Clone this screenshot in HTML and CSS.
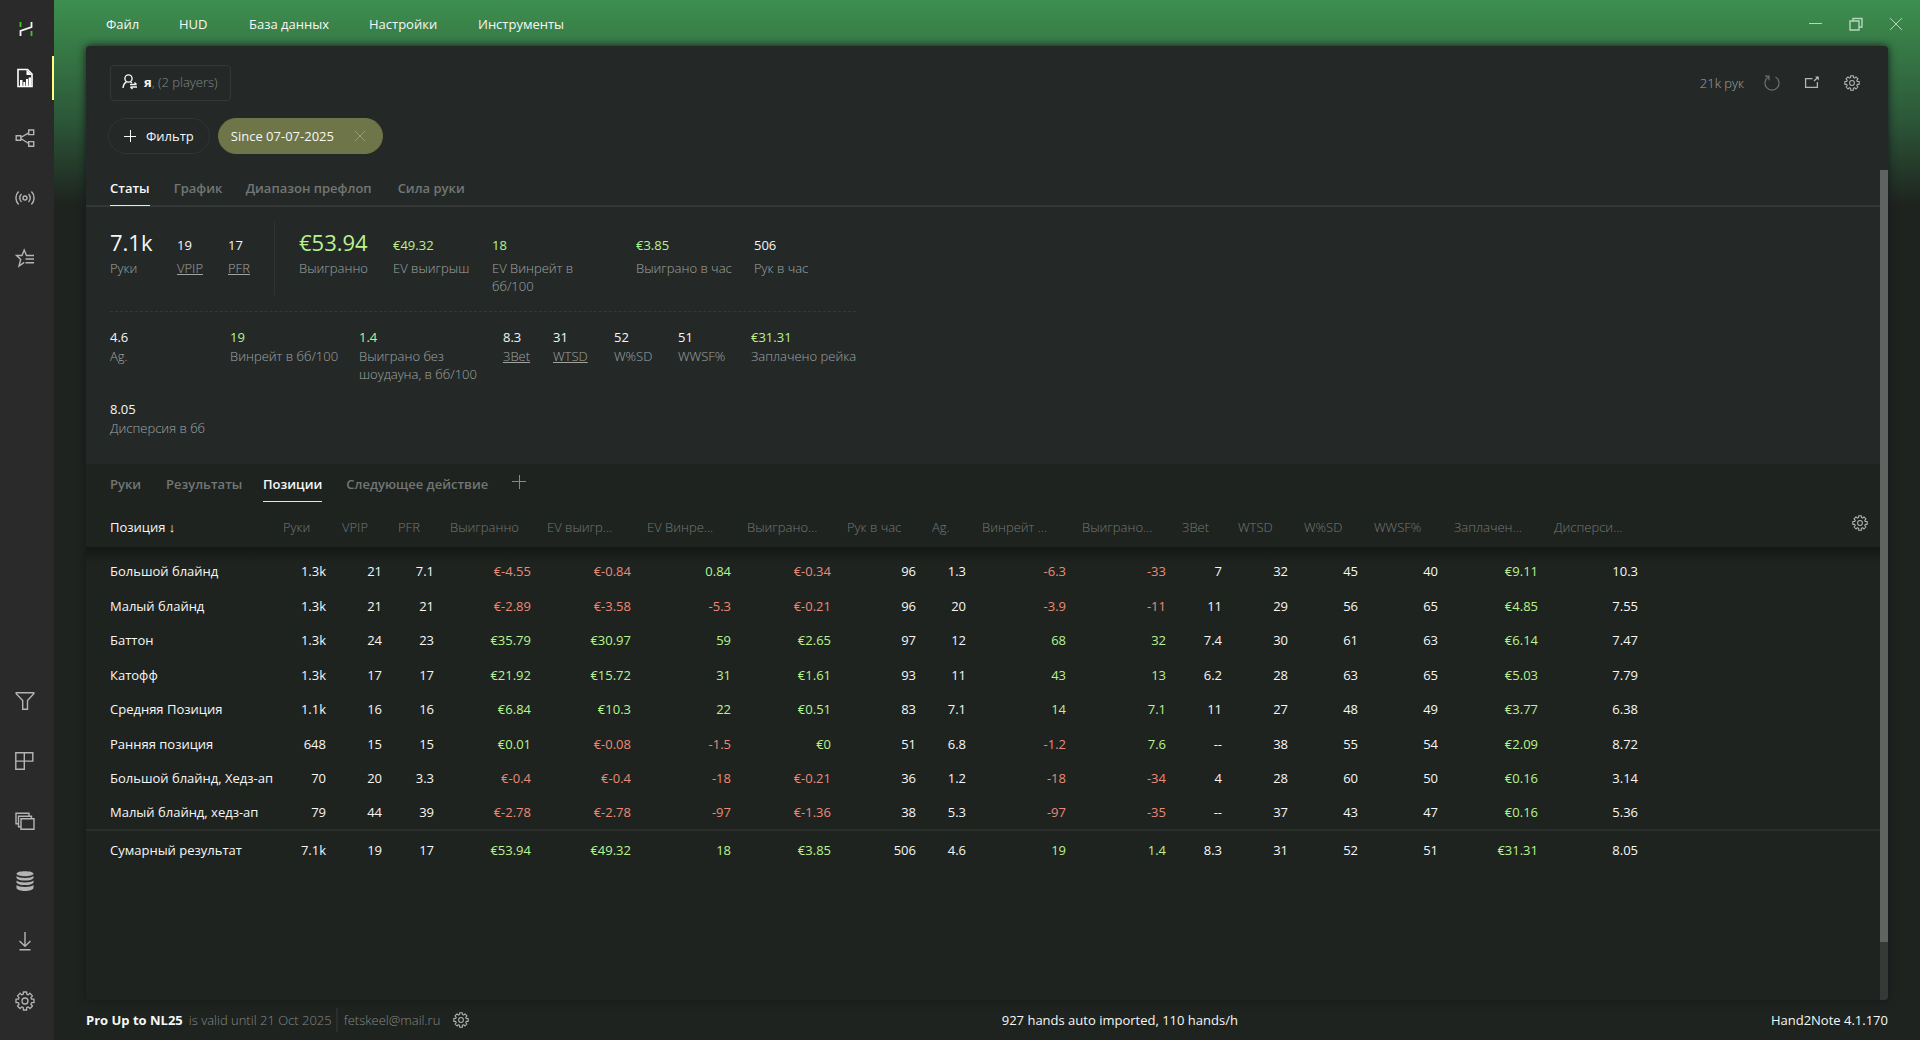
FILE: index.html
```html
<!DOCTYPE html>
<html lang="ru">
<head>
<meta charset="utf-8">
<title>Hand2Note</title>
<link rel="stylesheet" href="styles.css">
</head>
<body>
<svg class="defs" width="0" height="0" aria-hidden="true">
  <symbol id="gear" viewBox="0 0 20 20">
    <g fill="none" stroke="currentColor" stroke-width="1.3" stroke-linejoin="round">
      <path d="M8.3 1h3.4v2.2l1.6.7 1.6-1.6 2.6 2.6-1.6 1.7.6 1.6H19v3.5h-2.4l-.7 1.6 1.6 1.7-2.5 2.5-1.7-1.6-1.6.7V19H8.300v-2.500l-1.600-.6L5 17.500 2.500 15l1.600-1.700-.7-1.600H1V8.200h2.400l.7-1.600L2.500 4.900 5 2.300l1.700 1.600 1.600-.7z"/>
      <circle cx="10" cy="10" r="3"/>
    </g>
  </symbol>
</svg>
<div class="app">
  <nav class="sidebar" aria-label="Разделы">
    <a class="logo" href="#" aria-label="Hand2Note">
      <svg width="16" height="16" viewBox="0 0 16 16" fill="none" stroke-width="1.8"><path d="M2.500 1v5M13.500 10v5" stroke="#45c22c"/><path d="M13.500 1v5.200L2.500 9.800V15" stroke="#f2f2f2"/></svg>
    </a>
    <a class="side-item active" href="#" aria-label="Отчёты">
      <svg width="18" height="20" viewBox="0 0 18 20"><path d="M2 1.500h9.500L16 6v12.500H2z" fill="none" stroke="#fff" stroke-width="1.600"/><path d="M10.500 1.500V7H16M4 18v-6h2.500v6zM7.300 18v-4h2v4zM10 18v-7h2v7zM12.600 18V9.500H15V18z" fill="#fff"/></svg>
    </a>
    <a class="side-item" href="#" aria-label="Дерево">
      <svg width="20" height="20" viewBox="0 0 20 20" fill="none" stroke="currentColor" stroke-width="1.400"><path d="M1.200 7.700h4.600v4.600H1.200zM13.700 2h5v4.600h-5zM13.700 13.600h5v4.700h-5zM5.800 9.500l7.900-4.700M5.800 10.500l7.900 5"/></svg>
    </a>
    <a class="side-item" href="#" aria-label="Онлайн">
      <svg width="20" height="20" viewBox="0 0 20 20" fill="none" stroke="currentColor" stroke-width="1.400"><circle cx="10" cy="10" r="2"/><path d="M6.500 6a5.500 5.500 0 0 0 0 8M13.500 6a5.500 5.500 0 0 1 0 8M3.600 3.600a9 9 0 0 0 0 12.800M16.400 3.600a9 9 0 0 1 0 12.800"/></svg>
    </a>
    <a class="side-item" href="#" aria-label="Избранное">
      <svg width="20" height="20" viewBox="0 0 20 20" fill="none" stroke="currentColor" stroke-width="1.400"><path d="M19 7.500h-7.500L9.200 2 7 7.500H1.500l4.200 4L4 18l5.200-3.600M10.500 11H19M10.500 14.800H19"/></svg>
    </a>
    <span class="side-fill"></span>
    <a class="side-item" href="#" aria-label="Фильтры">
      <svg width="20" height="20" viewBox="0 0 20 20" fill="none" stroke="currentColor" stroke-width="1.400"><path d="M1.200 1.700h17.600v1.100l-6.300 6.700v8.800H7.700V9.500L1.200 2.800z"/></svg>
    </a>
    <a class="side-item" href="#" aria-label="Макет">
      <svg width="20" height="20" viewBox="0 0 20 20" fill="none" stroke="currentColor" stroke-width="1.400"><path d="M.8 1.700h17v8.400H.8zM9.300 1.700v16.600H.8V1.700"/></svg>
    </a>
    <a class="side-item" href="#" aria-label="Окна">
      <svg width="20" height="20" viewBox="0 0 20 20" fill="none" stroke="currentColor" stroke-width="1.400"><path d="M6 7.700h13v10.600H6z"/><path d="M6 15.700H3.500V5.200h13v2.500"/><path d="M3.500 12.700H1V2.200h13v3"/></svg>
    </a>
    <a class="side-item" href="#" aria-label="База данных">
      <svg width="18" height="20" viewBox="0 0 18 20"><path fill="currentColor" d="M.5 2.800C.5-.5 17.500-.5 17.500 2.800S.5 6 .5 2.800zM.5 5c2 2.600 15 2.600 17 0v2c-1 3.400-16 3.400-17 0zM.5 9.500c2 2.600 15 2.600 17 0v2c-1 3.400-16 3.400-17 0zM.5 14c2 2.600 15 2.600 17 0v3c-1 4-16 4-17 0z"/></svg>
    </a>
    <a class="side-item" href="#" aria-label="Импорт">
      <svg width="18" height="20" viewBox="0 0 18 20" fill="none" stroke="currentColor" stroke-width="1.400"><path d="M9 1v14M3.500 10L9 15.300l5.500-5.300M3.500 18.800h11"/></svg>
    </a>
    <a class="side-item" href="#" aria-label="Настройки"><svg width="20" height="20"><use href="#gear"/></svg></a>
  </nav>

  <div class="main">
    <header class="titlebar">
      <nav class="menu" aria-label="Меню">
        <a class="w-33" href="#">Файл</a><a class="w-30" href="#">HUD</a><a class="w-80" href="#">База данных</a><a class="w-69" href="#">Настройки</a><a href="#">Инструменты</a>
      </nav>
      <div class="window-buttons">
        <button type="button" aria-label="Свернуть"><svg width="14" height="14" viewBox="0 0 14 14" fill="none" stroke="currentColor"><path d="M0 6.500h13"/></svg></button>
        <button type="button" aria-label="Восстановить"><svg width="14" height="14" viewBox="0 0 14 14" fill="none" stroke="currentColor"><path d="M1 4h9v9H1z" stroke-width="1.400"/><path d="M4 4V1.500h9V10h-3" stroke-width="1.400"/></svg></button>
        <button type="button" aria-label="Закрыть"><svg width="14" height="14" viewBox="0 0 14 14" fill="none" stroke="currentColor"><path d="M1 1l12 12M13 1L1 13"/></svg></button>
      </div>
    </header>

    <main class="panel">
      <div class="panel-head">
        <div class="head-row">
          <button type="button" class="player">
            <svg width="16" height="16" viewBox="0 0 16 16" fill="none" stroke="#f4f4f4" stroke-width="1.400"><circle cx="6.500" cy="4.500" r="3.600"/><path d="M1 14c.4-3.500 1.500-5 3.500-6M8.500 8l1.500 1"/><path d="M8 10.500h6.500M12.500 8.500l2 2M15 13H8.500M10.500 15l-2-2"/></svg>
            <span><b>я</b>, (2 players)</span>
          </button>
          <div class="head-tools">
            <span>21k рук</span>
            <button type="button" class="dim" aria-label="Обновить"><svg width="16" height="16" viewBox="0 0 16 16" fill="none" stroke="currentColor" stroke-width="1.200"><path d="M4.500 2A7 7 0 1 0 11.500 2M1 1.200h4v4"/></svg></button>
            <button type="button" aria-label="Открыть в окне"><svg width="16" height="16" viewBox="0 0 16 16" fill="none" stroke="currentColor" stroke-width="1.300"><path d="M8.500 3.700H1.600v8.600h11.800V7"/><path d="M10 6l4-3.800"/><path d="M11 1.500h3.800v4z" fill="currentColor" stroke="none"/></svg></button>
            <button type="button" aria-label="Настройки отчёта"><svg width="16" height="16"><use href="#gear"/></svg></button>
          </div>
        </div>
        <div class="filters">
          <button type="button" class="pill add"><svg width="12" height="12" viewBox="0 0 12 12" stroke="currentColor"><path d="M0 6.500h12M6.500 0v12"/></svg>Фильтр</button>
          <button type="button" class="pill chip">Since 07-07-2025<svg width="12" height="12" viewBox="0 0 12 12" stroke="#969b72"><path d="M1 1l10 10M11 1L1 11"/></svg></button>
        </div>
      </div>

      <div class="panel-body">
        <div class="content">
          <nav class="tabs lined" aria-label="Вид">
            <a class="active" href="#">Статы</a><a class="w-48" href="#">График</a><a class="w-128" href="#">Диапазон префлоп</a><a href="#">Сила руки</a>
          </nav>
          <section class="stats">
            <dl class="row-a">
              <div><dd class="big">7.1k</dd><dt>Руки</dt></div>
              <div><dd>19</dd><dt><a href="#">VPIP</a></dt></div>
              <div><dd>17</dd><dt><a href="#">PFR</a></dt></div>
              <div class="divider"></div>
              <div><dd class="big pos">€53.94</dd><dt>Выигранно</dt></div>
              <div><dd class="pos">€49.32</dd><dt>EV выигрыш</dt></div>
              <div><dd class="pos">18</dd><dt>EV Винрейт в<br>бб/100</dt></div>
              <div><dd class="pos">€3.85</dd><dt>Выиграно в час</dt></div>
              <div><dd>506</dd><dt>Рук в час</dt></div>
            </dl>
            <dl class="row-b">
              <div><dd>4.6</dd><dt>Ag.</dt></div>
              <div><dd class="pos">19</dd><dt>Винрейт в бб/100</dt></div>
              <div><dd class="pos">1.4</dd><dt>Выиграно без<br>шоудауна, в бб/100</dt></div>
              <div><dd>8.3</dd><dt><a href="#">3Bet</a></dt></div>
              <div><dd>31</dd><dt><a href="#">WTSD</a></dt></div>
              <div><dd>52</dd><dt>W%SD</dt></div>
              <div><dd>51</dd><dt>WWSF%</dt></div>
              <div><dd class="pos">€31.31</dd><dt>Заплачено рейка</dt></div>
              <div><dd>8.05</dd><dt>Дисперсия в бб</dt></div>
            </dl>
          </section>

          <section class="report">
            <nav class="tabs" aria-label="Отчёт">
              <a class="w-32" href="#">Руки</a><a class="w-73" href="#">Результаты</a><a class="active" href="#">Позиции</a><a class="w-142" href="#">Следующее действие</a>
              <button type="button" aria-label="Добавить отчёт"><svg width="14" height="14" viewBox="0 0 14 14" stroke="currentColor"><path d="M0 6.500h14M7.500 0v14"/></svg></button>
            </nav>
            <table>
              <colgroup><col class="c-181"><col class="c-59"><col class="c-56"><col class="c-52"><col class="c-97"><col class="c-100"><col class="c-100"><col class="c-100"><col class="c-85"><col class="c-50"><col class="c-100"><col class="c-100"><col class="c-56"><col class="c-66"><col class="c-70"><col class="c-80"><col class="c-100"><col class="c-100"><col></colgroup>
              <thead><tr><th class="sorted">Позиция ↓</th><th>Руки</th><th>VPIP</th><th>PFR</th><th>Выигранно</th><th>EV выигр...</th><th>EV Винре...</th><th>Выиграно...</th><th>Рук в час</th><th>Ag.</th><th>Винрейт ...</th><th>Выиграно...</th><th>3Bet</th><th>WTSD</th><th>W%SD</th><th>WWSF%</th><th>Заплачен...</th><th>Дисперси...</th><th class="tool"><button type="button" aria-label="Настройки таблицы"><svg width="16" height="16"><use href="#gear"/></svg></button></th></tr></thead>
              <tbody>
<tr><td>Большой блайнд</td><td>1.3k</td><td>21</td><td>7.1</td><td class="neg">€-4.55</td><td class="neg">€-0.84</td><td class="pos">0.84</td><td class="neg">€-0.34</td><td>96</td><td>1.3</td><td class="neg">-6.3</td><td class="neg">-33</td><td>7</td><td>32</td><td>45</td><td>40</td><td class="pos">€9.11</td><td>10.3</td><td></td></tr>
<tr><td>Малый блайнд</td><td>1.3k</td><td>21</td><td>21</td><td class="neg">€-2.89</td><td class="neg">€-3.58</td><td class="neg">-5.3</td><td class="neg">€-0.21</td><td>96</td><td>20</td><td class="neg">-3.9</td><td class="neg">-11</td><td>11</td><td>29</td><td>56</td><td>65</td><td class="pos">€4.85</td><td>7.55</td><td></td></tr>
<tr><td>Баттон</td><td>1.3k</td><td>24</td><td>23</td><td class="pos">€35.79</td><td class="pos">€30.97</td><td class="pos">59</td><td class="pos">€2.65</td><td>97</td><td>12</td><td class="pos">68</td><td class="pos">32</td><td>7.4</td><td>30</td><td>61</td><td>63</td><td class="pos">€6.14</td><td>7.47</td><td></td></tr>
<tr><td>Катофф</td><td>1.3k</td><td>17</td><td>17</td><td class="pos">€21.92</td><td class="pos">€15.72</td><td class="pos">31</td><td class="pos">€1.61</td><td>93</td><td>11</td><td class="pos">43</td><td class="pos">13</td><td>6.2</td><td>28</td><td>63</td><td>65</td><td class="pos">€5.03</td><td>7.79</td><td></td></tr>
<tr><td>Средняя Позиция</td><td>1.1k</td><td>16</td><td>16</td><td class="pos">€6.84</td><td class="pos">€10.3</td><td class="pos">22</td><td class="pos">€0.51</td><td>83</td><td>7.1</td><td class="pos">14</td><td class="pos">7.1</td><td>11</td><td>27</td><td>48</td><td>49</td><td class="pos">€3.77</td><td>6.38</td><td></td></tr>
<tr><td>Ранняя позиция</td><td>648</td><td>15</td><td>15</td><td class="pos">€0.01</td><td class="neg">€-0.08</td><td class="neg">-1.5</td><td class="pos">€0</td><td>51</td><td>6.8</td><td class="neg">-1.2</td><td class="pos">7.6</td><td>--</td><td>38</td><td>55</td><td>54</td><td class="pos">€2.09</td><td>8.72</td><td></td></tr>
<tr><td>Большой блайнд, Хедз-ап</td><td>70</td><td>20</td><td>3.3</td><td class="neg">€-0.4</td><td class="neg">€-0.4</td><td class="neg">-18</td><td class="neg">€-0.21</td><td>36</td><td>1.2</td><td class="neg">-18</td><td class="neg">-34</td><td>4</td><td>28</td><td>60</td><td>50</td><td class="pos">€0.16</td><td>3.14</td><td></td></tr>
<tr><td>Малый блайнд, хедз-ап</td><td>79</td><td>44</td><td>39</td><td class="neg">€-2.78</td><td class="neg">€-2.78</td><td class="neg">-97</td><td class="neg">€-1.36</td><td>38</td><td>5.3</td><td class="neg">-97</td><td class="neg">-35</td><td>--</td><td>37</td><td>43</td><td>47</td><td class="pos">€0.16</td><td>5.36</td><td></td></tr>
              </tbody>
              <tfoot>
<tr><td>Сумарный результат</td><td>7.1k</td><td>19</td><td>17</td><td class="pos">€53.94</td><td class="pos">€49.32</td><td class="pos">18</td><td class="pos">€3.85</td><td>506</td><td>4.6</td><td class="pos">19</td><td class="pos">1.4</td><td>8.3</td><td>31</td><td>52</td><td>51</td><td class="pos">€31.31</td><td>8.05</td><td></td></tr>
              </tfoot>
            </table>
          </section>
        </div>
        <div class="scrollbar"><div class="thumb"></div></div>
      </div>
    </main>

    <footer class="statusbar">
      <div class="license"><b>Pro Up to NL25</b><span class="valid">is valid until 21 Oct 2025</span><span class="mail">fetskeel@mail.ru</span><button type="button" aria-label="Аккаунт"><svg width="16" height="16"><use href="#gear"/></svg></button></div>
      <span>927 hands auto imported, 110 hands/h</span>
      <span>Hand2Note 4.1.170</span>
    </footer>
  </div>
</div>
</body>
</html>
```
FILE: styles.css
```css
* { box-sizing: border-box; }

body {
  margin: 0;
  background: #1e231f;
  color: #f6f7f6;
  font: 13px/18px "Open Sans", "Noto Sans", sans-serif;
}

a { color: inherit; text-decoration: none; }
button {
  display: flex;
  align-items: center;
  padding: 0;
  border: 0;
  background: none;
  color: inherit;
  font: inherit;
  white-space: nowrap;
}
svg { display: block; flex: none; }
.defs { position: absolute; }

.app { display: flex; min-height: 100vh; }

/* Left icon rail */
.sidebar {
  display: flex;
  flex-direction: column;
  flex: none;
  width: 54px;
  padding-bottom: 9px;
  background: #2a2a2a;
  color: #b4b4b4;
}
.logo { display: flex; justify-content: center; height: 48px; padding: 21px 2px 0 0; }
.side-item {
  display: flex;
  align-items: center;
  justify-content: center;
  height: 60px;
  padding-right: 4px;
}
.side-item.active { background: linear-gradient(#ffff80, #ffff80) right center / 2px 44px no-repeat; }
.side-fill { flex: 1; }

/* Window area */
.main {
  display: flex;
  flex: 1;
  flex-direction: column;
  min-width: 0;
  padding: 0 32px;
  background: linear-gradient(#3d8f4f 0, #377a46 46px, #2c5738 120px, #1e231f 205px);
}
.titlebar { display: flex; justify-content: space-between; height: 46px; padding: 15px 0 13px 20px; }
.menu { display: flex; gap: 40px; }
.menu a { white-space: nowrap; }
.window-buttons { display: flex; gap: 26px; margin-right: -15px; color: #b5d6bb; }
.w-30 { width: 30px; }
.w-32 { width: 32px; }
.w-33 { width: 33px; }
.w-48 { width: 48px; }
.w-69 { width: 69px; }
.w-73 { width: 73px; }
.w-80 { width: 80px; }
.w-128 { width: 128px; }
.w-142 { width: 142px; }

.panel {
  display: flex;
  flex: 1;
  flex-direction: column;
  overflow: hidden;
  border-radius: 4px;
  background: #242928;
  box-shadow: 0 0 8px #15181d;
}
.panel-head { padding: 19px 24px 16px; }
.head-row { display: flex; align-items: center; justify-content: space-between; margin-bottom: 17px; }
.player {
  gap: 6px;
  height: 36px;
  padding: 0 12px 2px 11px;
  border: 1px solid #343938;
  border-radius: 4px;
  color: #858887;
  font-weight: 300;
}
.player b { color: #f6f7f6; font-weight: 700; }
.head-tools { display: flex; align-items: center; gap: 24px; padding-right: 4px; color: #b4b6b5; }
.head-tools span { margin-right: -4px; color: #a0a3a2; font-weight: 300; }
.head-tools .dim { color: #6b6f6e; }
.filters { display: flex; gap: 8px; margin-left: -2px; }
.pill { height: 36px; border: 1px solid #303534; border-radius: 18px; }
.add { gap: 10px; padding: 0 15px; }
.chip { gap: 20px; padding: 0 16px 0 12px; border-color: #6e7548; background: #6e7548; }

.panel-body { display: flex; flex: 1; }
.content { display: flex; flex: 1; flex-direction: column; min-width: 0; padding-top: 4px; }
.scrollbar { width: 8px; background: #353a38; }
.thumb { height: 93%; background: #5f6361; }

/* Tabs */
.tabs { display: flex; gap: 24px; height: 33px; padding: 0 24px; color: #727675; font-weight: 600; }
.tabs.lined { background: linear-gradient(#343938, #343938) bottom / 100% 2px no-repeat; }
.tabs a { height: 32px; line-height: 28px; white-space: nowrap; }
.tabs .active { border-bottom: 1px solid #e4e5e4; color: #f6f7f6; }
.tabs button { height: 24px; color: #858887; }

/* Summary figures */
.stats { width: 770px; padding: 15px 0 27px 24px; }
dl { display: grid; margin: 0; }
dd { margin: 0; }
dt { color: #a0a3a2; font-weight: 300; white-space: nowrap; }
dt a { text-decoration: underline; }
.pos { color: #b8f490; }
.neg { color: #ea8a78; }
.row-a {
  grid-template-columns: 43px 27px 22px 1px 70px 75px 120px 94px auto;
  column-gap: 24px;
  padding-bottom: 16px;
  border-bottom: 1px dashed #343938;
}
.row-a dd { height: 37px; padding-top: 11px; line-height: 24px; }
.row-a .big { padding-top: 6px; font-size: 22px; line-height: 28px; }
.divider { background: #303534; }
.row-b {
  grid-template-columns: 96px 105px 120px 26px 37px 40px 49px auto;
  gap: 16px 24px;
  padding-top: 15px;
}
.row-b dd { line-height: 20px; }

/* Positions report */
.report { flex: 1; padding-top: 6px; background: #1e231f; }
table { width: 100%; border-collapse: collapse; table-layout: fixed; }
th, td { padding: 0; text-align: right; white-space: nowrap; }
th { height: 44px; padding: 3px 0 0 16px; color: #757976; font-weight: 300; text-align: left; }
th.sorted { color: #f6f7f6; font-weight: 400; }
th:first-child, td:first-child { padding-left: 24px; text-align: left; }
th.tool { padding: 0 12px 4px 0; color: #b4b6b5; }
.tool button { margin-left: auto; }
td { height: 34px; }
tbody tr:nth-child(even) td { height: 35px; }
tbody tr:first-child { background: linear-gradient(#141815, #1e231f) top / 100% 16px no-repeat; }
tbody tr:first-child td { height: 41px; padding-top: 6px; }
tfoot td { height: 38px; border-top: 2px solid #2a2f2c; }
.c-50 { width: 50px; }
.c-52 { width: 52px; }
.c-56 { width: 56px; }
.c-59 { width: 59px; }
.c-66 { width: 66px; }
.c-70 { width: 70px; }
.c-80 { width: 80px; }
.c-85 { width: 85px; }
.c-97 { width: 97px; }
.c-100 { width: 100px; }
.c-181 { width: 181px; }

/* Status bar */
.statusbar { display: flex; align-items: center; justify-content: space-between; height: 40px; }
.license { display: flex; align-items: center; color: #858887; white-space: nowrap; }
.license b { color: #f6f7f6; }
.valid { width: 149px; margin-left: 6px; border-right: 2px solid #2a2f2c; line-height: 24px; font-weight: 300; }
.mail { width: 99px; margin: 0 10px 0 6px; font-weight: 300; }
.license button { color: #b4b6b5; }
```
